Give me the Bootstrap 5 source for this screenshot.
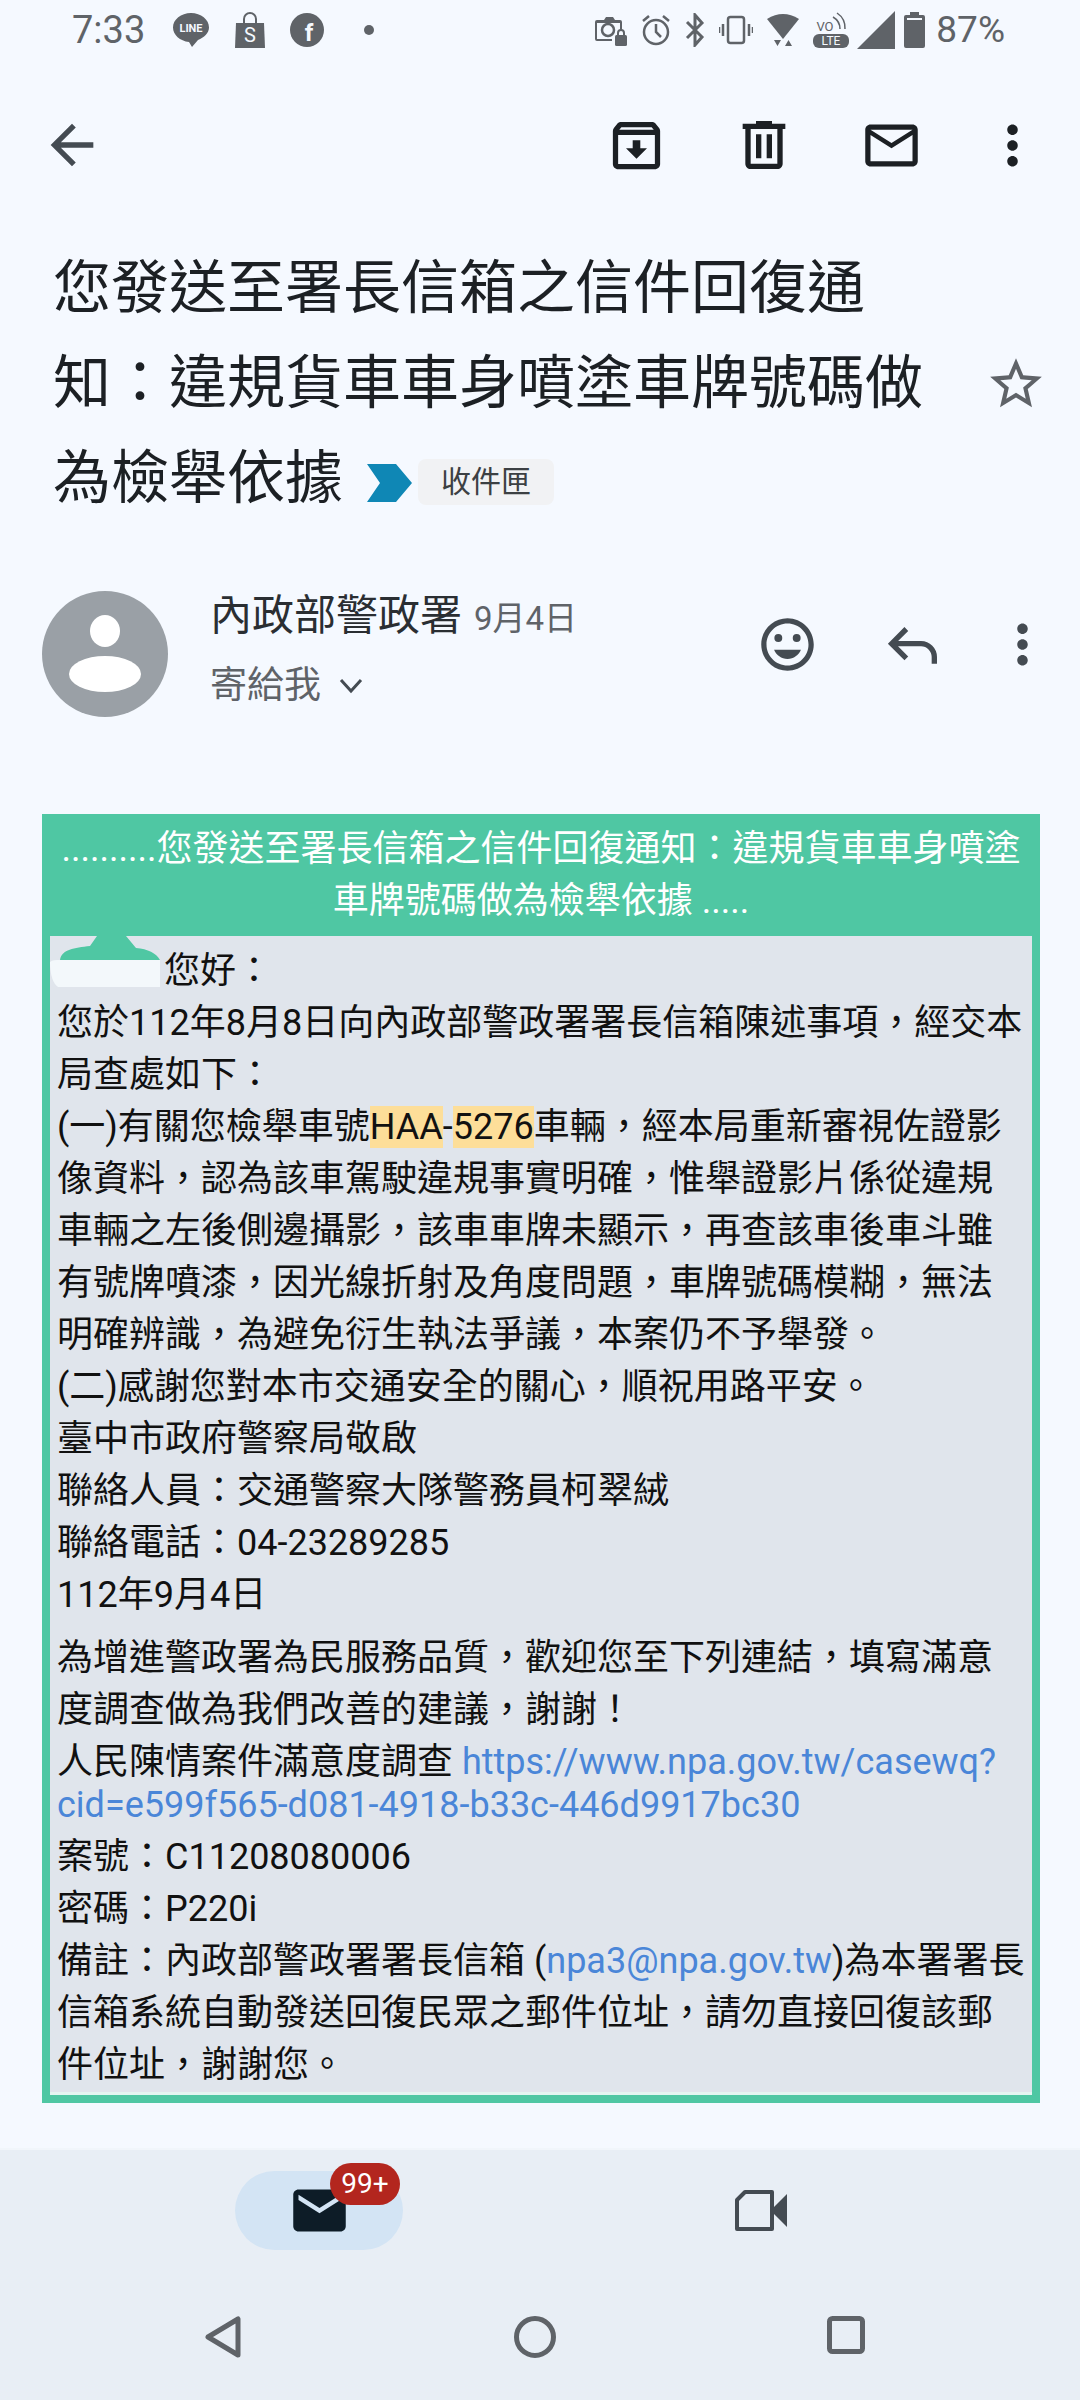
<!DOCTYPE html>
<html lang="zh-Hant">
<head>
<meta charset="utf-8">
<title>郵件</title>
<link href="https://cdn.jsdelivr.net/npm/bootstrap@5.3.0/dist/css/bootstrap.min.css" rel="stylesheet">
<style>
html,body{margin:0;background:#f5f9ff}
body{font-family:Roboto,"Noto Sans CJK TC",sans-serif;width:1080px;height:2400px;overflow:hidden;color:#1c2024}
svg{display:block;flex:none}
.shell{height:2400px}
.status-row{height:60px;padding:0 75px 0 72px;color:#5f6368;fill:#5f6368}
.clock{font-size:38px;line-height:60px;width:100px}
.left-icons{gap:24px}
.right-icons{gap:14px}
.pct{font-size:37px;line-height:60px;margin-left:-3px}
.tool-row{height:170px;padding:0 36px 0 40px}
.tool-actions{gap:58px}
.gap-wide{margin-right:6px}
.ico-dark{fill:#1c2024}
.ico-gray{fill:#444b52}
.subject-row{padding:11px 33px 0 53px}
.subject{font-size:58px;line-height:95px;font-weight:400;margin:0;white-space:nowrap;color:#1c2024}
.chip-arrow{display:inline-block;vertical-align:middle;margin:0 6px 0 24px}
.chip-box{display:inline-block;vertical-align:middle;background:#f1f2f4;color:#3c4043;font-size:30px;line-height:46px;height:46px;padding:0 23px;border-radius:8px;margin-top:-2px}
.sender-row{margin-top:65px;padding:0 26px 0 42px;height:126px}
.sender-text{margin-left:42px;margin-top:-3px}
.sender-name{font-size:42px;line-height:56px;color:#2a2e32;white-space:nowrap}
.sender-date{font-size:33px;color:#5f6368;margin-left:12px}
.sender-to{font-size:37px;line-height:50px;margin-top:14px;color:#5f6368}
.sender-actions{margin-top:-19px}
.act-a{margin-right:62px}
.act-b{margin-right:46px}
.mail-frame{margin:97px 40px 0 42px;background:#4fc7a3;position:relative}
.mail-head{color:#fff;font-size:36px;line-height:52px;height:122px;padding-top:9px;text-align:center;white-space:nowrap}
.mail-body{margin:0 8px 8px;background:#e0e5ec;border-bottom:3px solid #e4f5f1;color:#111;font-size:36px;line-height:52px;padding:9px 0 4px 7px;white-space:nowrap;height:1159px}
.para-gap{margin-top:11px}
.link-block{line-height:43px;margin:5px 0 4px}
.mail-body a{color:#4a86d8;text-decoration:none}
.hit{background:#fdde99}
.mask-art{position:absolute;left:0;top:122px}
.blank-name{display:inline-block;width:107px}
.bottom-tabs{margin-top:auto;height:252px;background:#e8eef5;border-top:2px solid #f1f6fb}
.tab-row{padding-top:21px;height:130px}
.tab-pill{width:168px;height:79px;background:#d3e4f4;border-radius:40px;position:relative;margin-left:235px}
.tab-video{margin-left:332px}
.count-badge{position:absolute;left:95px;top:-8px;background:#b3261e;font-size:28px;font-weight:400;line-height:42px;height:42px;width:70px;padding:0;border-radius:21px}
.sys-row{padding-top:36px}
.sp-back{margin-left:205px}
.sp-home{margin-left:273px}
.sp-recent{margin-left:271px}
.nudge-a{margin-left:-6px}
.nudge-b{margin-left:-5px}
</style>
</head>
<body>
<div class="shell d-flex flex-column">

  <div class="status-row d-flex align-items-center">
    <div class="clock">7:33</div>
    <div class="left-icons d-flex align-items-center">
      <svg width="38" height="36" viewBox="0 0 38 36"><path d="M19 1C9 1 1 7.500 1 15.500 1 23 8 29 17 30l3 5 6-7c6-2.500 11-7 11-12.500C37 7.500 29 1 19 1z"/><text x="19" y="20" font-size="11" font-weight="700" text-anchor="middle" fill="#f5f9ff" font-family="Roboto">LINE</text></svg>
      <svg width="32" height="36" viewBox="0 0 32 36"><path d="M2 11h28l1 25H1z"/><path d="M10 11V7a6 6 0 0 1 12 0v4" fill="none" stroke="#5f6368" stroke-width="2"/><text x="16" y="30" font-size="20" text-anchor="middle" fill="#f5f9ff" font-family="Roboto">S</text></svg>
      <svg width="34" height="34" viewBox="0 0 34 34"><circle cx="17" cy="17" r="17"/><text x="19" y="28" font-size="24" font-weight="700" text-anchor="middle" fill="#f5f9ff" font-family="Roboto">f</text></svg>
      <svg width="10" height="10" viewBox="0 0 10 10" class="ms-3"><circle cx="5" cy="5" r="5"/></svg>
    </div>
    <div class="right-icons d-flex align-items-center ms-auto">
      <svg width="33" height="32" viewBox="0 0 33 32"><path d="M10 6l2-3h7l2 3h5a2 2 0 0 1 2 2v8h-2V9H3v16h15v2H3a2 2 0 0 1-2-2V8a2 2 0 0 1 2-2z"/><circle cx="14" cy="16" r="6" fill="none" stroke="#5f6368" stroke-width="2.500"/><rect x="21" y="21" width="12" height="11" rx="1.500"/><path d="M24 21v-2a3 3 0 0 1 6 0v2" fill="none" stroke="#5f6368" stroke-width="2"/></svg>
      <svg width="30" height="32" viewBox="0 0 30 32"><circle cx="15" cy="18" r="12" fill="none" stroke="#5f6368" stroke-width="2.500"/><path d="M15 10v8l5 5M2 7l6-5M28 7l-6-5" fill="none" stroke="#5f6368" stroke-width="2.500"/></svg>
      <svg width="20" height="34" viewBox="0 0 20 34"><path d="M2 9l15 15-7 8V2l7 8L2 25" fill="none" stroke="#5f6368" stroke-width="3"/></svg>
      <svg width="34" height="30" viewBox="0 0 34 30"><rect x="9" y="2" width="16" height="26" rx="2.500" fill="none" stroke="#5f6368" stroke-width="2.500"/><path d="M4 9v12M0 12v6M30 9v12M34 12v6" stroke="#5f6368" stroke-width="2.500"/></svg>
      <svg width="32" height="36" viewBox="0 0 32 36"><path d="M0 7Q16-3 32 7L16 27z"/><path d="M9 28h7l-3.500 6zM20 34h7l-3.500-6z" transform="translate(-2)"/></svg>
      <svg width="36" height="36" viewBox="0 0 36 36"><rect y="22" width="36" height="14" rx="6"/><text x="18" y="33" font-size="12" text-anchor="middle" fill="#f5f9ff" font-family="Roboto">LTE</text><text x="12" y="19" font-size="13" text-anchor="middle" font-family="Roboto">VO</text><path d="M20 5a14 14 0 0 1 7 12M24 1a18 18 0 0 1 8 16" fill="none" stroke="#5f6368" stroke-width="1.500"/></svg>
      <svg class="nudge-a" width="38" height="38" viewBox="0 0 38 38"><path d="M38 0v38H0z"/></svg>
      <svg class="nudge-b" width="21" height="36" viewBox="0 0 21 36"><path d="M6 0h9v3h4a2 2 0 0 1 2 2v29a2 2 0 0 1-2 2H2a2 2 0 0 1-2-2V5a2 2 0 0 1 2-2h4z"/><rect x="3" y="6" width="15" height="2" fill="#f5f9ff"/></svg>
      <div class="pct">87%</div>
    </div>
  </div>

  <div class="tool-row d-flex align-items-center justify-content-between">
    <svg class="ico-gray" width="64" height="64" viewBox="0 0 24 24"><path d="M20 11H7.830l5.590-5.590L12 4l-8 8 8 8 1.410-1.410L7.830 13H20v-2z"/></svg>
    <div class="tool-actions d-flex align-items-center">
      <svg class="ico-dark gap-wide" width="63" height="63" viewBox="0 0 24 24"><path d="M20.540 5.230l-1.390-1.680C18.880 3.210 18.470 3 18 3H6c-.47 0-.88.21-1.160.55L3.460 5.230C3.170 5.570 3 6.020 3 6.500V19c0 1.100.9 2 2 2h14c1.100 0 2-.9 2-2V6.500c0-.48-.17-.93-.46-1.270zM6.240 5h11.520l.81.97H5.440l.8-.97zM5 19V8h14v11H5zm8.450-9h-2.900v3H8l4 4 4-4h-2.550z"/></svg>
      <svg class="ico-dark gap-wide" width="64" height="64" viewBox="0 0 24 24"><path d="M15 4V3H9v1H4v2h1v13c0 1.100.9 2 2 2h10c1.100 0 2-.9 2-2V6h1V4h-5zm2 15H7V6h10v13zM9 8h2v9H9zm4 0h2v9h-2z"/></svg>
      <svg class="ico-dark" width="63" height="63" viewBox="0 0 24 24"><path d="M20 4H4c-1.100 0-2 .9-2 2v12c0 1.100.9 2 2 2h16c1.100 0 2-.9 2-2V6c0-1.100-.9-2-2-2zm0 14H4V8l8 5 8-5v10zm-8-7L4 6h16l-8 5z"/></svg>
      <svg class="ico-dark" width="63" height="63" viewBox="0 0 24 24"><path d="M12 8c1.100 0 2-.9 2-2s-.9-2-2-2-2 .9-2 2 .9 2 2 2zm0 2c-1.100 0-2 .9-2 2s.9 2 2 2 2-.9 2-2-.9-2-2-2zm0 6c-1.100 0-2 .9-2 2s.9 2 2 2 2-.9 2-2-.9-2-2-2z"/></svg>
    </div>
  </div>

  <div class="subject-row d-flex align-items-center justify-content-between">
    <h1 class="subject">您發送至署長信箱之信件回復通<br>知：違規貨車車身噴塗車牌號碼做<br>為檢舉依據<svg class="chip-arrow" width="45" height="38" viewBox="0 0 45 38"><path d="M0 0h29l16 19-16 19H0l13-19z" fill="#0f87b5"/></svg><span class="chip-box">收件匣</span></h1>
    <svg width="62" height="62" viewBox="0 0 24 24" fill="#5f6368"><path d="M22 9.240l-7.190-.62L12 2 9.190 8.630 2 9.240l5.460 4.730L5.820 21 12 17.270 18.180 21l-1.630-7.030L22 9.240zM12 15.400l-3.760 2.270 1-4.280-3.320-2.880 4.380-.38L12 6.100l1.710 4.040 4.380.38-3.320 2.880 1 4.280L12 15.400z"/></svg>
  </div>

  <div class="sender-row d-flex align-items-center">
    <svg width="126" height="126" viewBox="0 0 126 126"><circle cx="63" cy="63" r="63" fill="#9aa0a6"/><ellipse cx="63" cy="40" rx="15" ry="16" fill="#fff"/><ellipse cx="63" cy="83" rx="36" ry="18" fill="#fff"/></svg>
    <div class="sender-text align-self-start">
      <div class="sender-name">內政部警政署<span class="sender-date">9月4日</span></div>
      <div class="sender-to d-flex align-items-center">寄給我<svg class="ms-3" width="28" height="28" viewBox="0 0 28 28"><path d="M4 8l10 11L24 8" fill="none" stroke="#444b52" stroke-width="3"/></svg></div>
    </div>
    <div class="sender-actions d-flex align-items-center ms-auto">
      <svg class="act-a" width="63" height="63" viewBox="0 0 24 24" fill="#444b52"><path d="M11.990 2C6.470 2 2 6.480 2 12s4.470 10 9.990 10C17.520 22 22 17.520 22 12S17.520 2 11.990 2zM12 20c-4.420 0-8-3.580-8-8s3.580-8 8-8 8 3.580 8 8-3.580 8-8 8z"/><circle cx="15.500" cy="9.500" r="1.500"/><circle cx="8.500" cy="9.500" r="1.500"/><path d="M12 17.500c2.330 0 4.300-1.460 5.110-3.500H6.890c.81 2.040 2.780 3.500 5.110 3.500z"/></svg>
      <svg class="act-b" width="64" height="64" viewBox="0 0 24 24"><path d="M9.500 6 4 11.500 9.500 17M4.500 11.500H15a5 5 0 0 1 5 5V19" fill="none" stroke="#444b52" stroke-width="2"/></svg>
      <svg width="63" height="63" viewBox="0 0 24 24" fill="#444b52"><path d="M12 8c1.100 0 2-.9 2-2s-.9-2-2-2-2 .9-2 2 .9 2 2 2zm0 2c-1.100 0-2 .9-2 2s.9 2 2 2 2-.9 2-2-.9-2-2-2zm0 6c-1.100 0-2 .9-2 2s.9 2 2 2 2-.9 2-2-.9-2-2-2z"/></svg>
    </div>
  </div>

  <div class="mail-frame">
    <div class="mail-head">..........您發送至署長信箱之信件回復通知：違規貨車車身噴塗<br>車牌號碼做為檢舉依據 .....</div>
    <div class="mail-body">
      <div><span class="blank-name"></span>您好：</div>
      <div>您於112年8月8日向內政部警政署署長信箱陳述事項，經交本<br>局查處如下：</div>
      <div>(一)有關您檢舉車號<span class="hit">HAA</span>-<span class="hit">5276</span>車輛，經本局重新審視佐證影<br>像資料，認為該車駕駛違規事實明確，惟舉證影片係從違規<br>車輛之左後側邊攝影，該車車牌未顯示，再查該車後車斗雖<br>有號牌噴漆，因光線折射及角度問題，車牌號碼模糊，無法<br>明確辨識，為避免衍生執法爭議，本案仍不予舉發。</div>
      <div>(二)感謝您對本市交通安全的關心，順祝用路平安。</div>
      <div>臺中市政府警察局敬啟</div>
      <div>聯絡人員：交通警察大隊警務員柯翠絨</div>
      <div>聯絡電話：04-23289285</div>
      <div>112年9月4日</div>
      <div class="para-gap">為增進警政署為民服務品質，歡迎您至下列連結，填寫滿意<br>度調查做為我們改善的建議，謝謝！</div>
      <div class="link-block">人民陳情案件滿意度調查 <a href="#">https://www.npa.gov.tw/casewq?<br>cid=e599f565-d081-4918-b33c-446d9917bc30</a></div>
      <div>案號：C11208080006</div>
      <div>密碼：P220i</div>
      <div>備註：內政部警政署署長信箱 (<a href="#">npa3@npa.gov.tw</a>)為本署署長<br>信箱系統自動發送回復民眾之郵件位址，請勿直接回復該郵<br>件位址，謝謝您。</div>
    </div>
    <svg class="mask-art" width="122" height="54" viewBox="0 0 122 54"><path d="M18 24C20 13 32 12 48 10L55 0H84L94 12C106 13 114 17 118 24z" fill="#4fc7a3"/><path d="M8 26C10 24 14 24 18 24H118V51H16C11 48 8 38 8 26z" fill="#f3f8fb"/></svg>
  </div>

  <div class="bottom-tabs">
    <div class="tab-row d-flex">
      <div class="tab-pill d-flex align-items-center justify-content-center">
        <svg width="63" height="63" viewBox="0 0 24 24" fill="#0d1c27"><path d="M20 4H4c-1.100 0-2 .9-2 2v12c0 1.100.9 2 2 2h16c1.100 0 2-.9 2-2V6c0-1.100-.9-2-2-2zm0 4l-8 5-8-5V6l8 5 8-5v2z"/></svg>
        <span class="badge count-badge">99+</span>
      </div>
      <svg class="tab-video" width="52" height="79" viewBox="0 0 52 79"><path d="M10 21H37V58H2V29z" fill="none" stroke="#444b52" stroke-width="4" stroke-linejoin="round"/><path d="M39 36 52 23V56L39 43z" fill="#444b52"/></svg>
    </div>
    <div class="sys-row d-flex">
      <svg class="sp-back" width="36" height="42" viewBox="0 0 36 42"><path d="M33 3V39L3 21z" fill="none" stroke="#5f6368" stroke-width="5" stroke-linejoin="round"/></svg>
      <svg class="sp-home" width="42" height="42" viewBox="0 0 42 42"><circle cx="21" cy="21" r="18.500" fill="none" stroke="#5f6368" stroke-width="5"/></svg>
      <svg class="sp-recent" width="38" height="38" viewBox="0 0 38 38"><rect x="2.500" y="2.500" width="33" height="33" rx="3" fill="none" stroke="#5f6368" stroke-width="5"/></svg>
    </div>
  </div>
</div>
<script src="https://cdn.jsdelivr.net/npm/bootstrap@5.3.0/dist/js/bootstrap.bundle.min.js"></script>
</body>
</html>
